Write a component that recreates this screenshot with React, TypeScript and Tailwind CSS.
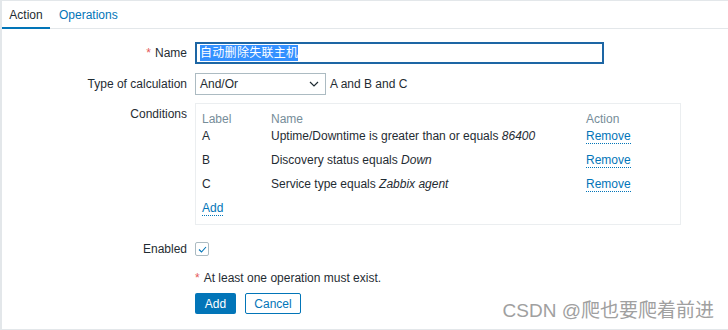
import React from 'react';

const conditions = [
  { label: 'A', text: 'Uptime/Downtime is greater than or equals ', value: '86400' },
  { label: 'B', text: 'Discovery status equals ', value: 'Down' },
  { label: 'C', text: 'Service type equals ', value: 'Zabbix agent' },
];

function Link({ children }: { children: React.ReactNode }) {
  return (
    <span className="text-[#0275b8] border-b border-dotted border-[#0275b8] leading-[13px]">{children}</span>
  );
}

export default function App() {
  return (
    <div
      className="relative h-[330px] w-[728px] overflow-hidden bg-white border-l-2 border-t border-b border-[#e3e7ea] text-[12px] text-[#1f2c33]"
      style={{ fontFamily: '"Liberation Sans", Arial, "Noto Sans CJK SC", sans-serif' }}
    >
      {/* tabs */}
      <div className="flex h-[28px] border-b border-[#e3e7ea]">
        <div className="w-[48px] flex items-center justify-center border-b-2 border-[#0275b8] -mb-px pt-px">Action</div>
        <div className="px-[9px] flex items-center text-[#0275b8] pt-px">Operations</div>
      </div>

      {/* form */}
      <div className="grid grid-cols-[185px_1fr] gap-x-[8px] pt-[13px]">
        <div className="flex items-center justify-end h-[22px]">
          <span className="text-[#e45959] mr-[4px]">*</span>Name
        </div>
        <div className="h-[22px] w-[409px] border-2 border-[#1d66a4] flex items-center px-[3px]">
          <span className="bg-[#3390ff] text-white leading-[16px] tracking-[0.3px]">自动删除失联主机</span>
        </div>

        <div className="flex items-center justify-end h-[22px] mt-[9px]">Type of calculation</div>
        <div className="flex items-center h-[22px] mt-[9px]">
          <div className="h-[22px] w-[131px] border border-[#acbbc2] flex items-center justify-between pl-[4px] pr-[6px]">
            <span>And/Or</span>
            <svg width="10" height="6" viewBox="0 0 10 6" fill="none" stroke="#1f2c33" strokeWidth="1.2">
              <path d="M1 1l4 4 4-4" />
            </svg>
          </div>
          <span className="ml-[4px]">A and B and C</span>
        </div>

        <div className="flex justify-end mt-[8px] pt-[2px]">Conditions</div>
        <div className="mt-[8px] w-[486px] h-[122px] border border-[#ebeef0] px-[6px] pt-[6px]">
          <div className="grid grid-cols-[69px_315px_1fr] text-[#768d99] h-[14px] items-center">
            <span>Label</span>
            <span>Name</span>
            <span>Action</span>
          </div>
          {conditions.map((c) => (
            <div key={c.label} className="grid grid-cols-[69px_315px_1fr] items-center h-[24px]">
              <span>{c.label}</span>
              <span>
                {c.text}
                <i>{c.value}</i>
              </span>
              <span>
                <Link>Remove</Link>
              </span>
            </div>
          ))}
          <div className="h-[26px] flex items-center">
            <Link>Add</Link>
          </div>
        </div>

        <div className="flex items-center justify-end h-[14px] mt-[17px]">Enabled</div>
        <div className="flex items-center mt-[17px]">
          <div className="w-[14px] h-[14px] border border-[#acbbc2] rounded-[2px] flex items-center justify-center">
            <svg width="9" height="7" viewBox="0 0 9 7" fill="none" stroke="#0275b8" strokeWidth="1.1">
              <path d="M1 3.5l2.5 2.5L8 1" />
            </svg>
          </div>
        </div>

        <div />
        <div className="mt-[15px] h-[14px] flex items-center">
          <span className="text-[#e45959] mr-[4px]">*</span>At least one operation must exist.
        </div>

        <div />
        <div className="flex gap-[9px] mt-[8px]">
          <button className="h-[21px] w-[41px] bg-[#0275b8] text-white rounded-[2px]">Add</button>
          <button className="h-[21px] w-[56px] border border-[#0275b8] text-[#0275b8] bg-white rounded-[2px]">Cancel</button>
        </div>
      </div>

      <div className="absolute right-[14px] bottom-[6px] text-[19px] leading-[24px] text-[#a0a0a0]">CSDN @爬也要爬着前进</div>
    </div>
  );
}
